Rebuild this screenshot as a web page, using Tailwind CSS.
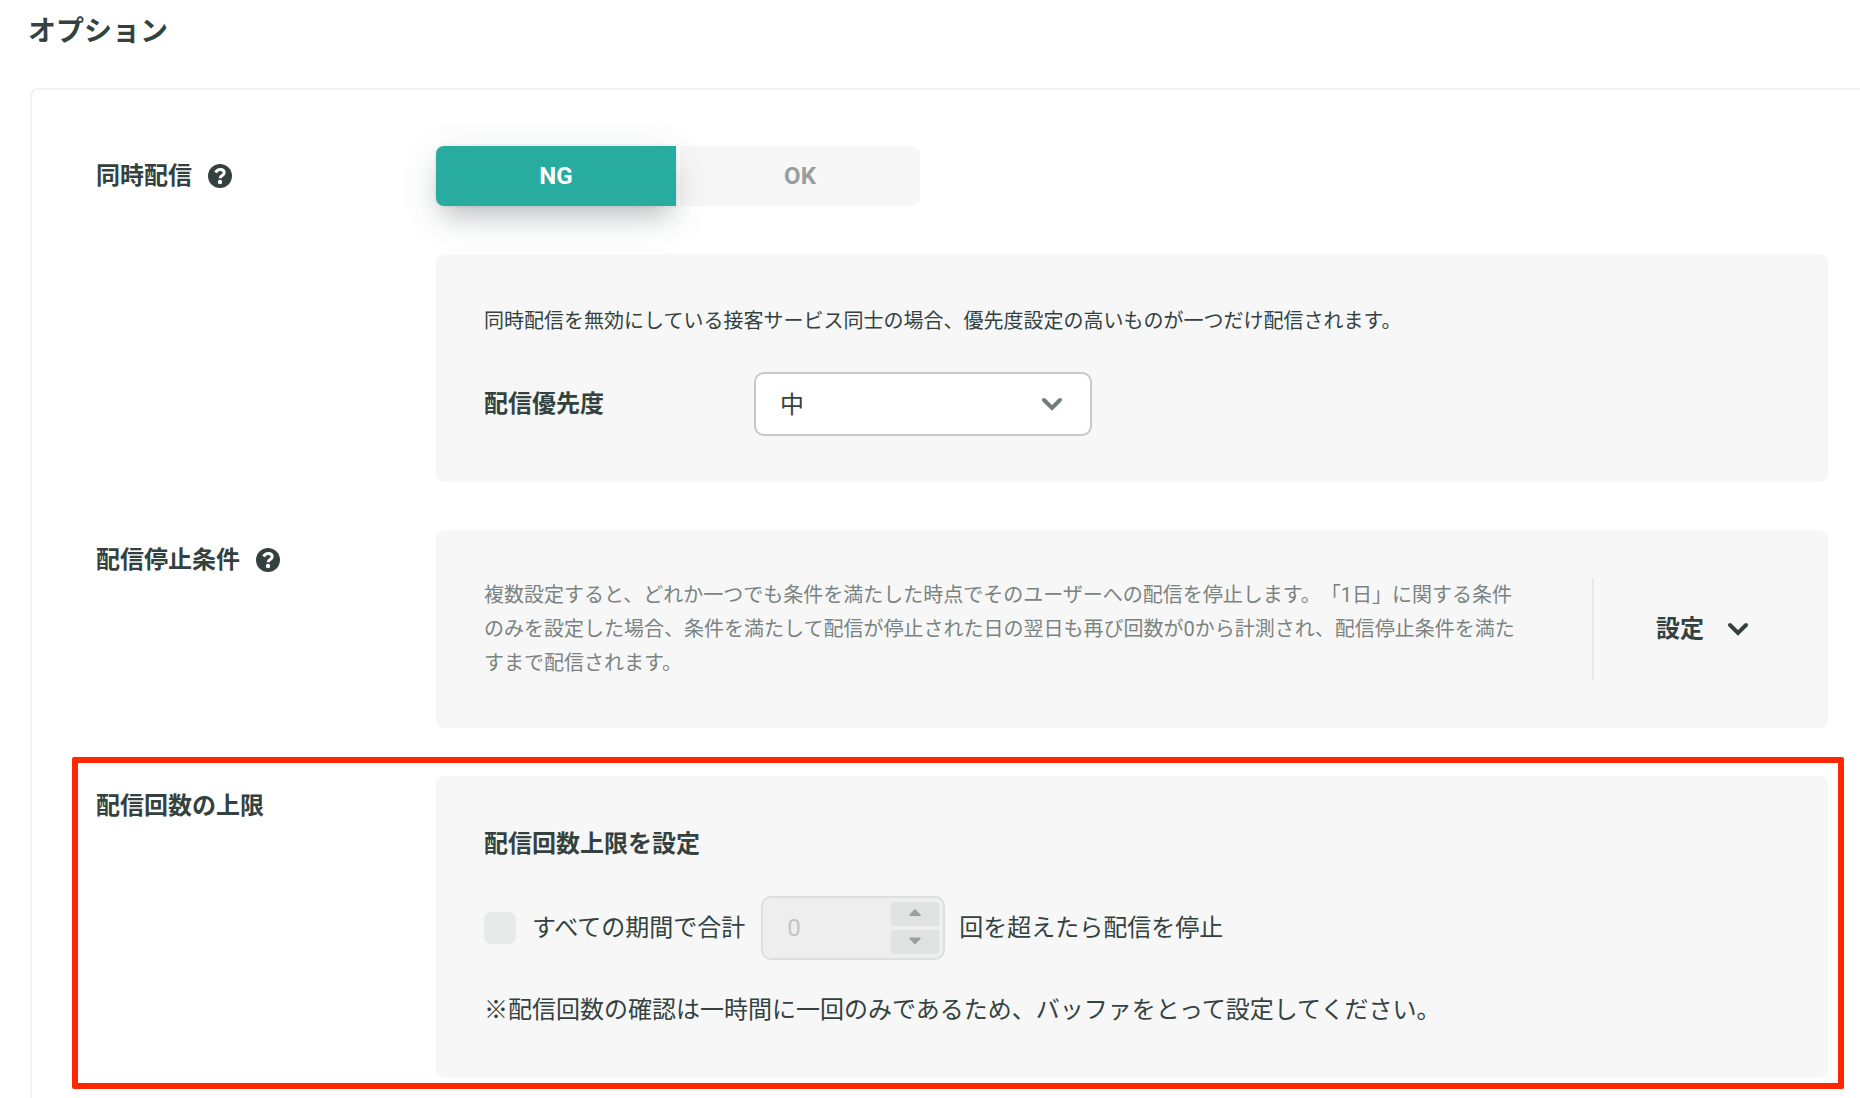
<!DOCTYPE html>
<html lang="ja">
<head>
<meta charset="utf-8">
<meta name="viewport" content="width=device-width, initial-scale=1">
<title>オプション</title>
<script src="https://cdn.jsdelivr.net/npm/@tailwindcss/browser@4"></script>
</head>
<body class="flex min-h-screen flex-col overflow-x-hidden bg-white font-['Roboto','Noto_Sans_CJK_JP',sans-serif] text-2xl text-[#34423f] [text-spacing-trim:space-all]">
  <h1 class="px-7 pt-3 pb-9 text-[28px] leading-10 font-bold">オプション</h1>

  <main class="ml-[30px] flex flex-1 flex-col gap-12 rounded-tl-lg border-t-2 border-l-2 border-[#f2f2f2] pt-14 pr-8 pb-5 pl-16">

    <section class="flex">
      <div class="flex h-15 w-[340px] shrink-0 items-center gap-4">
        <h2 class="font-bold">同時配信</h2>
        <button type="button" aria-label="同時配信のヘルプ">
          <svg class="size-6" viewBox="0 0 24 24" fill="none"><circle cx="12" cy="12" r="12" fill="#34423f"/><path d="M7.600 8.500C8.600 6.500 10.200 5.500 12.200 5.500c2.300 0 4 1.300 4 3.300 0 2.900-4 2.700-4 5.400" stroke="#fff" stroke-width="3"/><circle cx="12" cy="18" r="2.200" fill="#fff"/></svg>
        </button>
      </div>
      <div class="flex min-w-0 flex-1 flex-col gap-12">
        <div class="flex gap-1" role="group" aria-label="同時配信">
          <button type="button" aria-pressed="true" class="relative z-10 h-15 w-60 rounded-l-lg bg-[#29aca0] font-bold text-white shadow-[0_0_0_2px_rgba(52,66,63,0.04),0_10px_40px_rgba(52,66,63,0.14),0_16px_24px_-8px_rgba(52,66,63,0.24)]">NG</button>
          <button type="button" aria-pressed="false" class="h-15 w-60 rounded-r-lg bg-[#f7f7f7] font-bold text-[#979e9c]">OK</button>
        </div>
        <div class="rounded-lg bg-[#f7f7f7] px-12 pt-12 pb-[46px]">
          <p class="text-xl leading-[38px]">同時配信を無効にしている接客サービス同士の場合、優先度設定の高いものが一つだけ配信されます。</p>
          <div class="mt-8 flex items-center">
            <label for="priority" class="w-[270px] font-bold">配信優先度</label>
            <div class="relative w-[338px]">
              <select id="priority" class="h-16 w-full appearance-none rounded-[10px] border-2 border-[#c8c8c8] bg-white px-6 pt-[2px]"><option>高</option><option selected>中</option><option>低</option></select>
              <svg class="pointer-events-none absolute top-6 right-7 h-4 w-6" viewBox="0 0 24 16" fill="none" stroke="#737d7b" stroke-width="4" stroke-linecap="round"><path d="M4 4l8 8 8-8"/></svg>
            </div>
          </div>
        </div>
      </div>
    </section>

    <section class="flex">
      <div class="flex h-15 w-[340px] shrink-0 items-center gap-4">
        <h2 class="font-bold">配信停止条件</h2>
        <button type="button" aria-label="配信停止条件のヘルプ">
          <svg class="size-6" viewBox="0 0 24 24" fill="none"><circle cx="12" cy="12" r="12" fill="#34423f"/><path d="M7.600 8.500C8.600 6.500 10.200 5.500 12.200 5.500c2.300 0 4 1.300 4 3.300 0 2.900-4 2.700-4 5.400" stroke="#fff" stroke-width="3"/><circle cx="12" cy="18" r="2.200" fill="#fff"/></svg>
        </button>
      </div>
      <div class="flex min-w-0 flex-1 rounded-lg bg-[#f7f7f7] py-12 pl-12">
        <p class="min-w-0 flex-1 pr-[72px] text-xl leading-[34px] text-[#7a8381]">複数設定すると、どれか一つでも条件を満たした時点でそのユーザーへの配信を停止します。「1日」に関する条件のみを設定した場合、条件を満たして配信が停止された日の翌日も再び回数が0から計測され、配信停止条件を満たすまで配信されます。</p>
        <button type="button" class="flex w-[236px] shrink-0 items-center gap-[22px] border-l-2 border-[#e8e8e8] pl-[62px] font-bold">設定
          <svg class="h-4 w-6" viewBox="0 0 24 16" fill="none" stroke="#34423f" stroke-width="4" stroke-linecap="round"><path d="M4 4l8 8 8-8"/></svg>
        </button>
      </div>
    </section>

    <section class="relative flex">
      <div class="flex h-15 w-[340px] shrink-0 items-center">
        <h2 class="font-bold">配信回数の上限</h2>
      </div>
      <div class="min-w-0 flex-1 rounded-lg bg-[#f7f7f7] p-12">
        <h3 class="leading-10 font-bold">配信回数上限を設定</h3>
        <div class="mt-8 flex items-center">
          <input id="total" type="checkbox" disabled class="size-8 appearance-none rounded-lg bg-[#e7eae9]">
          <label for="total" class="ml-4">すべての期間で合計</label>
          <div class="mr-[14px] ml-4 flex h-16 w-[184px] items-start rounded-[10px] border-2 border-[#dedede] bg-[#eeeeee] pt-1 pr-1">
            <input type="text" inputmode="numeric" value="0" disabled aria-label="配信回数の上限" class="h-13 min-w-0 flex-1 pl-6 text-[#c0c4cc]">
            <div class="flex w-12 flex-col gap-1">
              <button type="button" disabled aria-label="増やす" class="flex h-6 items-start justify-center rounded-t bg-[#e0e2e1] pt-[7px]"><svg class="h-2 w-3" viewBox="0 0 12 8" fill="#9aa09f"><path d="M5.200.700Q6 0 6.800.700L11.500 5.500Q12 7 11 7H1Q0 7 .5 5.500Z"/></svg></button>
              <button type="button" disabled aria-label="減らす" class="flex h-6 items-start justify-center rounded-b bg-[#e0e2e1] pt-[7px]"><svg class="h-2 w-3" viewBox="0 0 12 8" fill="#9aa09f"><path d="M5.200 6.800Q6 7.600 6.800 6.800L11.500 2Q12 .5 11 .5H1Q0 .5.5 2Z"/></svg></button>
            </div>
          </div>
          <span>回を超えたら配信を停止</span>
        </div>
        <p class="mt-[30px] leading-10">※配信回数の確認は一時間に一回のみであるため、バッファをとって設定してください。</p>
      </div>
      <div class="pointer-events-none absolute -top-[19px] -right-4 -bottom-[11px] -left-6 rounded-xs border-6 border-[#ff2600]"></div>
    </section>
  </main>
</body>
</html>
